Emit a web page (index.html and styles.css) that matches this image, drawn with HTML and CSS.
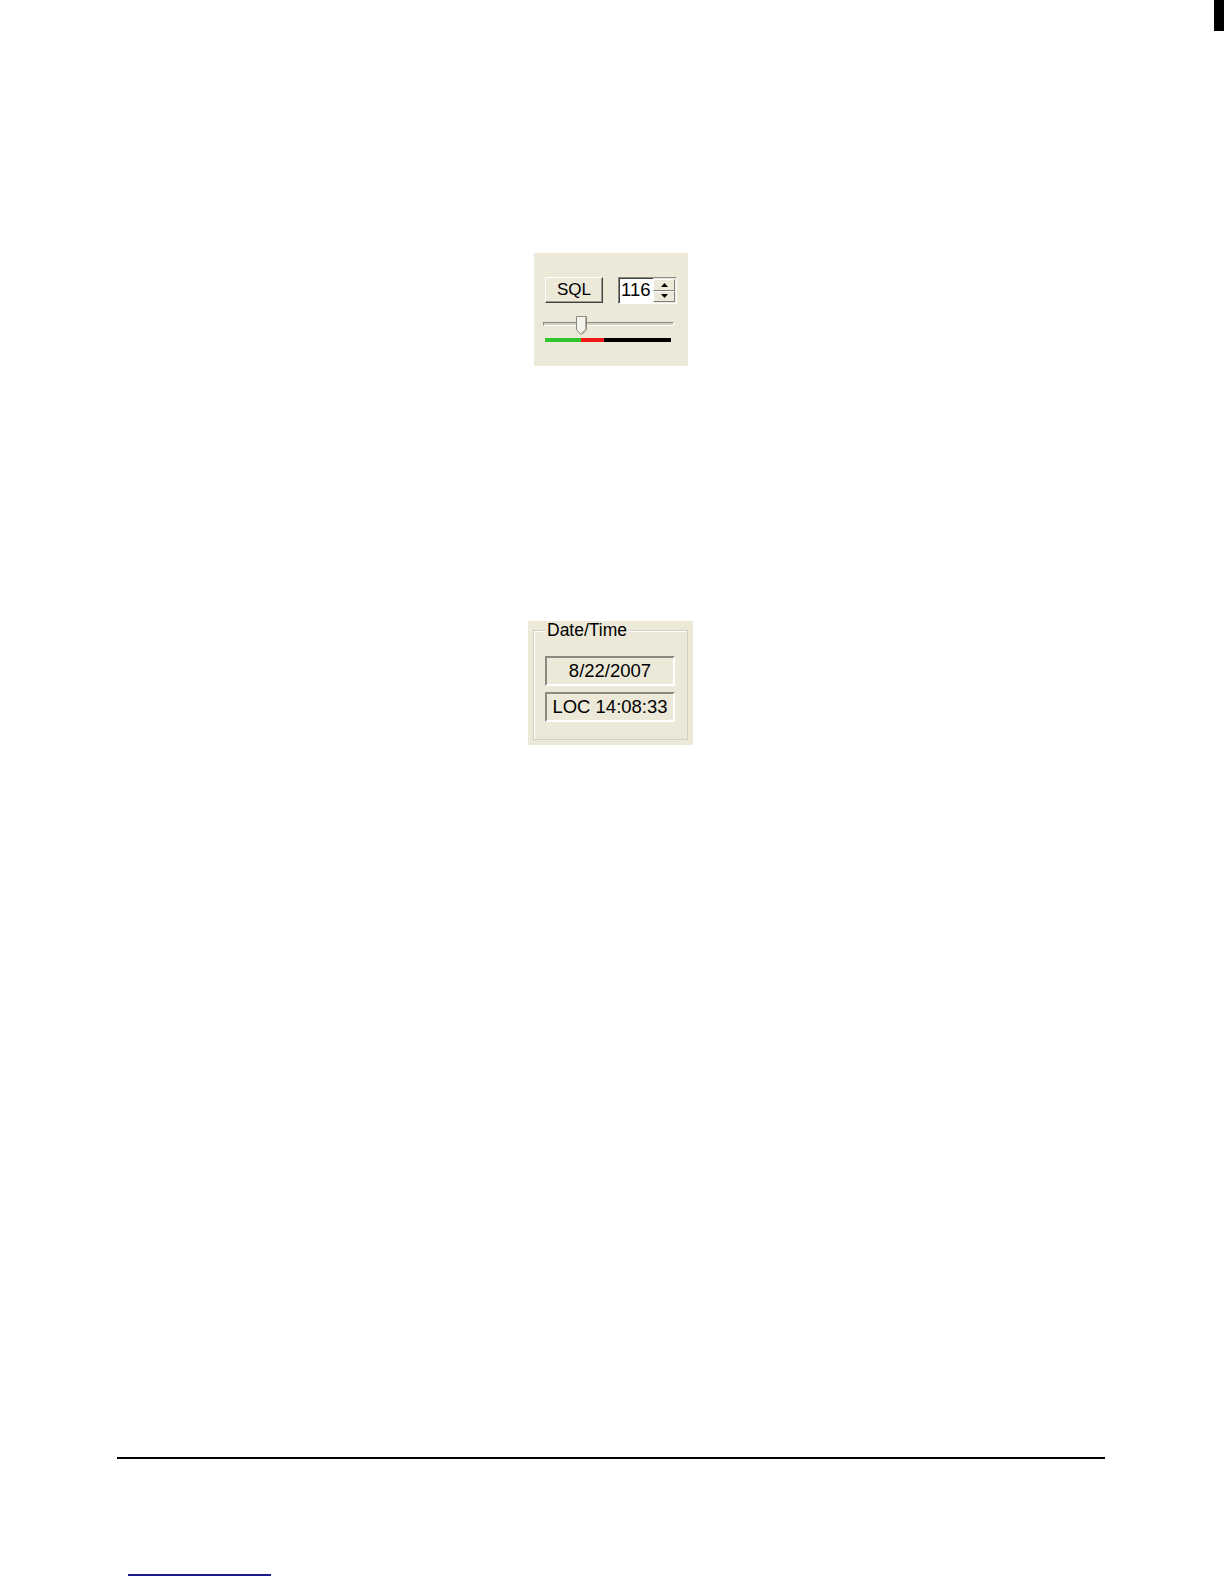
FILE: index.html
```html
<!DOCTYPE html>
<html>
<head>
<meta charset="utf-8">
<link rel="stylesheet" href="styles.css">
</head>
<body>
<div class="page">
  <div class="edge-mark"></div>

  <div class="sql-panel">
    <div class="sql-row">
      <div class="btn">SQL</div>
      <div class="spin">
        <div class="spin-value">116</div>
        <div class="spin-btns">
          <div class="spin-btn"><svg width="7" height="4" viewBox="0 0 7 4"><path d="M3.5 0 L7 4 L0 4 Z" fill="#000"/></svg></div>
          <div class="spin-btn"><svg width="7" height="4" viewBox="0 0 7 4"><path d="M0 0 L7 0 L3.5 4 Z" fill="#000"/></svg></div>
        </div>
      </div>
    </div>
    <div class="slider">
      <div class="track"></div>
      <svg class="thumb" width="11" height="19" viewBox="0 0 11 19">
        <path d="M0.5 0.5 H10.5 V14 L5.5 18.5 L0.5 14 Z" fill="#f4f3ee" stroke="#8a8a80"/>
        <path d="M9.5 1.5 V13.6 L5.5 17.2" stroke="#a8a89c" fill="none"/>
      </svg>
    </div>
    <div class="level">
      <div class="lv-green"></div>
      <div class="lv-red"></div>
      <div class="lv-black"></div>
    </div>
  </div>

  <div class="dt-panel">
    <fieldset class="group">
      <legend>Date/Time</legend>
      <div class="field first">8/22/2007</div>
      <div class="field">LOC 14:08:33</div>
    </fieldset>
  </div>

  <div class="footer-rule"></div>
  <div class="footer-link"></div>
</div>
</body>
</html>
```

FILE: styles.css
```css
html, body {
  margin: 0;
  padding: 0;
  background: #fff;
}

.page {
  position: relative;
  width: 1224px;
  height: 1584px;
  overflow: hidden;
  font-family: "Liberation Sans", Arial, sans-serif;
  color: #000;
  display: flex;
  flex-direction: column;
  align-items: flex-start;
}

.edge-mark {
  position: absolute;
  top: 0;
  left: 1214px;
  width: 11px;
  height: 31px;
  background: #000;
}

/* SQL panel */
.sql-panel {
  margin: 253px 0 0 534px;
  width: 154px;
  height: 113px;
  background: #ECE9D8;
  box-sizing: border-box;
  padding: 24px 0 0 9px;
  display: flex;
  flex-direction: column;
}

.sql-row {
  display: flex;
  align-items: flex-start;
  gap: 15px;
  padding-left: 2px;
}

.btn {
  width: 58px;
  height: 26px;
  box-sizing: border-box;
  background: #ECE9D8;
  border-top: 1px solid #fff;
  border-left: 1px solid #fff;
  border-right: 1px solid #404040;
  border-bottom: 1px solid #404040;
  box-shadow: inset -1px -1px 0 #9d9d92;
  font-size: 17px;
  line-height: 24px;
  text-align: center;
}

.spin {
  width: 59px;
  height: 27px;
  box-sizing: border-box;
  border-top: 1px solid #8a8a80;
  border-left: 1px solid #8a8a80;
  border-right: 1px solid #fff;
  border-bottom: 1px solid #fff;
  box-shadow: inset 1px 1px 0 #404040;
  background: #fff;
  display: flex;
}

.spin-value {
  flex: 1;
  font-size: 18.5px;
  line-height: 24px;
  padding-left: 2px;
}

.spin-btns {
  width: 23px;
  display: flex;
  flex-direction: column;
  padding: 1px 1px 1px 0;
  box-sizing: border-box;
  background: #ECE9D8;
}

.spin-btn {
  flex: 1;
  display: flex;
  align-items: center;
  justify-content: center;
  background: #ECE9D8;
  border-top: 1px solid #fff;
  border-left: 1px solid #fff;
  border-right: 1px solid #808080;
  border-bottom: 1px solid #808080;
}

.spin-btn svg {
  display: block;
}

.slider {
  position: relative;
  width: 131px;
  height: 19px;
  margin-top: 12px;
}

.track {
  position: absolute;
  left: 0;
  top: 6px;
  width: 131px;
  height: 4px;
  box-sizing: border-box;
  border-top: 1px solid #8a8a80;
  border-left: 1px solid #8a8a80;
  border-bottom: 1px solid #fff;
  border-right: 1px solid #fff;
  background: #d4d0c0;
}

.thumb {
  position: absolute;
  left: 33px;
  top: 0;
}

.level {
  display: flex;
  margin: 3px 0 0 2px;
  height: 4px;
}

.lv-green { width: 36px; background: #2ec52e; }
.lv-red { width: 23px; background: #f01818; }
.lv-black { width: 67px; background: #000; }

/* Date/Time panel */
.dt-panel {
  margin: 255px 0 0 528px;
  width: 165px;
  height: 124px;
  box-sizing: border-box;
  background: #ECE9D8;
  padding: 0 5px 5px 5px;
}

.group {
  margin: 0;
  height: 119px;
  box-sizing: border-box;
  border: 1px solid #d0d0bf;
  box-shadow: inset 1px 1px 0 #fff;
  padding: 0 11px;
}

.group legend {
  padding: 0 2px;
  background: #ECE9D8;
  font-size: 17.5px;
  line-height: 19px;
}

.field {
  width: 130px;
  height: 30px;
  box-sizing: border-box;
  margin-top: 6px;
  border-top: 2px solid #8a8a80;
  border-left: 2px solid #8a8a80;
  border-right: 2px solid #fff;
  border-bottom: 2px solid #fff;
  font-size: 18.5px;
  line-height: 26px;
  text-align: center;
}

.field.first {
  margin-top: 16px;
}

/* Footer */
.footer-rule {
  margin: 712px 0 0 117px;
  width: 988px;
  height: 2px;
  background: #000;
}

.footer-link {
  margin: 115px 0 0 128px;
  width: 143px;
  height: 2px;
  background: #1a1a8c;
}
```
